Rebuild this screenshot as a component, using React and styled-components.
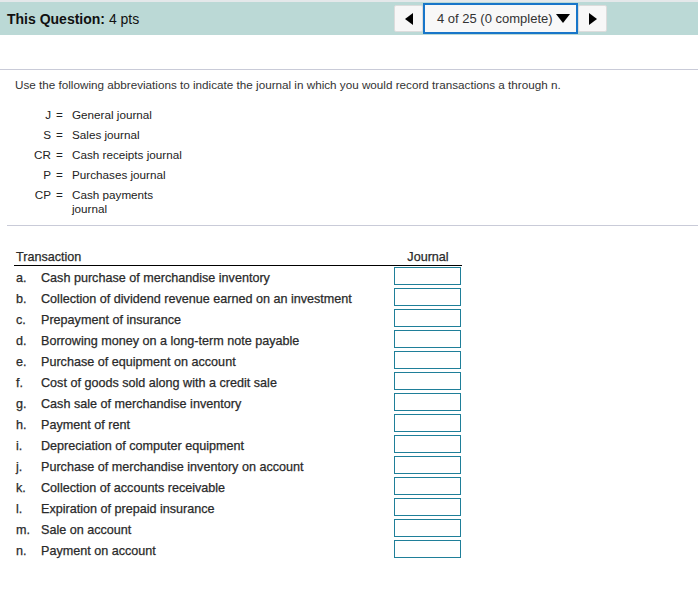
import styled, { createGlobalStyle } from "styled-components";

const GlobalStyle = createGlobalStyle`
  body {
    margin: 0;
    background: #fff;
    font-family: "Liberation Sans", Arial, sans-serif;
    color: #333;
  }
`;

const Header = styled.div`
  height: 33px;
  border-top: 2px solid #e4e8ea;
  background-color: #bbd9d6;
  display: flex;
  align-items: center;
  padding-left: 7px;
`;

const Title = styled.div`
  font-size: 14px;
  color: #111;

  b {
    font-weight: bold;
  }
`;

const Nav = styled.div`
  margin-left: auto;
  margin-right: 91px;
  display: flex;
  align-items: center;
`;

const ArrowButton = styled.button`
  width: 29px;
  height: 27px;
  padding: 0;
  background-color: #f7f7f7;
  border: 1px solid #dcdcdc;
  border-radius: 2px;
  display: flex;
  align-items: center;
  justify-content: center;

  &::before {
    content: "";
    width: 0;
    height: 0;
    border-top: 6px solid transparent;
    border-bottom: 6px solid transparent;
    ${(p) =>
      p.$dir === "left"
        ? "border-right: 8px solid #000;"
        : "border-left: 8px solid #000;"}
  }
`;

const Select = styled.div`
  width: 155px;
  height: 31px;
  box-sizing: border-box;
  border: 2px solid #1876c9;
  background-color: #f8f8f8;
  display: flex;
  align-items: center;
  padding-left: 12px;
  font-size: 13px;
  color: #333;

  &::after {
    content: "";
    margin-left: 3px;
    width: 0;
    height: 0;
    border-left: 7px solid transparent;
    border-right: 7px solid transparent;
    border-top: 9px solid #000;
  }
`;

const Main = styled.div`
  padding-top: 34px;
`;

const Rule = styled.div`
  border-top: 1px solid #c9cbd8;
  margin-left: ${(p) => p.$indent || 0}px;
`;

const Intro = styled.p`
  margin: 8px 0 0 15px;
  font-size: 11.7px;
  line-height: 14px;
`;

const AbbrevList = styled.div`
  display: grid;
  grid-template-columns: 51px 21px 112px;
  row-gap: 6px;
  margin: 16px 0 9px 0;
  font-size: 11.7px;
  line-height: 14px;
  color: #222;
`;

const Code = styled.span`
  text-align: right;
`;

const Eq = styled.span`
  padding-left: 5px;
`;

const Table = styled.table`
  margin: 24px 0 0 14px;
  width: 448px;
  border-collapse: collapse;
  font-size: 12.6px;
  color: #2a2a2a;
  -webkit-text-stroke: 0.25px #2a2a2a;

  th {
    font-weight: normal;
    text-align: left;
    padding: 0 0 1px 2px;
    line-height: 14px;
    border-bottom: 1px solid #000;
  }

  th.journal {
    text-align: center;
    padding-left: 0;
  }

  td {
    box-sizing: border-box;
    height: 21px;
    padding: 4px 0 0 0;
    line-height: 14px;
    vertical-align: middle;
  }

  td.letter {
    width: 27px;
    padding-left: 2px;
  }

  td.box {
    width: 68px;
    padding: 0;
  }
`;

const JournalInput = styled.input`
  display: block;
  width: 67px;
  height: 18px;
  box-sizing: border-box;
  border: 1px solid #1f7f99;
  margin: 0;
  padding: 0 2px;
  font-size: 12px;
`;

const abbreviations = [
  ["J", "General journal"],
  ["S", "Sales journal"],
  ["CR", "Cash receipts journal"],
  ["P", "Purchases journal"],
  ["CP", "Cash payments journal"],
];

const transactions = [
  ["a.", "Cash purchase of merchandise inventory"],
  ["b.", "Collection of dividend revenue earned on an investment"],
  ["c.", "Prepayment of insurance"],
  ["d.", "Borrowing money on a long-term note payable"],
  ["e.", "Purchase of equipment on account"],
  ["f.", "Cost of goods sold along with a credit sale"],
  ["g.", "Cash sale of merchandise inventory"],
  ["h.", "Payment of rent"],
  ["i.", "Depreciation of computer equipment"],
  ["j.", "Purchase of merchandise inventory on account"],
  ["k.", "Collection of accounts receivable"],
  ["l.", "Expiration of prepaid insurance"],
  ["m.", "Sale on account"],
  ["n.", "Payment on account"],
];

const App = () => {
  return (
    <>
      <GlobalStyle />
      <Header>
        <Title>
          <b>This Question:</b> 4 pts
        </Title>
        <Nav>
          <ArrowButton $dir="left" aria-label="Previous question" />
          <Select>4 of 25 (0 complete)</Select>
          <ArrowButton $dir="right" aria-label="Next question" />
        </Nav>
      </Header>
      <Main>
        <Rule />
        <Intro>
          Use the following abbreviations to indicate the journal in which you
          would record transactions a through n.
        </Intro>
        <AbbrevList>
          {abbreviations.map(([code, desc]) => (
            <>
              <Code key={code}>{code}</Code>
              <Eq>=</Eq>
              <span>{desc}</span>
            </>
          ))}
        </AbbrevList>
        <Rule $indent={7} />
        <Table>
          <thead>
            <tr>
              <th colSpan={2}>Transaction</th>
              <th className="journal">Journal</th>
            </tr>
          </thead>
          <tbody>
            {transactions.map(([letter, text]) => (
              <tr key={letter}>
                <td className="letter">{letter}</td>
                <td>{text}</td>
                <td className="box">
                  <JournalInput type="text" />
                </td>
              </tr>
            ))}
          </tbody>
        </Table>
      </Main>
    </>
  );
};

export default App;
